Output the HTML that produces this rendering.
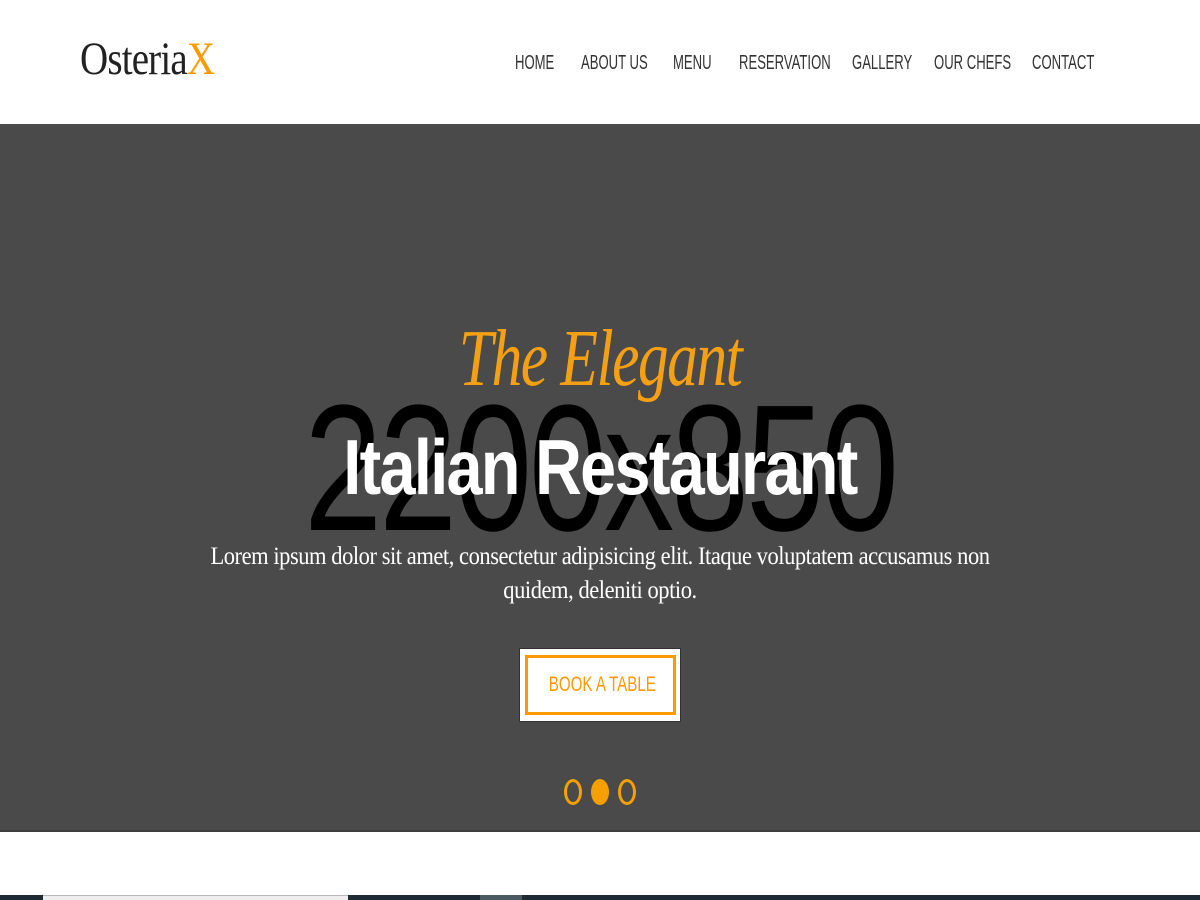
<!DOCTYPE html>
<html><head><meta charset="utf-8"><style>
*{margin:0;padding:0;box-sizing:border-box}
body{width:1200px;height:900px;overflow:hidden;background:#fff;font-family:"Liberation Sans",sans-serif;position:relative}
.logo{position:absolute;left:80px;top:32px;font-family:"Liberation Serif",serif;font-size:47px;color:#222;letter-spacing:-1px;transform:scaleX(.83);transform-origin:left}
.logo span{color:#f90}
nav{position:absolute;top:52px;left:515px;font-size:20px;color:#333}
nav a{position:absolute;white-space:nowrap;transform:scaleX(.655);transform-origin:left}
.hero{position:absolute;left:0;top:124px;width:1200px;height:708px;background:#4a4a4a;border-bottom:2px solid #3e3e3e}
.big{position:absolute;left:0;width:1200px;top:255px;text-align:center;font-size:180px;color:#000;transform:scaleX(.78);letter-spacing:-4px;line-height:1}
.eleg{position:absolute;width:1200px;text-align:center;top:190px;font-family:"Liberation Serif",serif;font-style:italic;font-size:80px;color:#f5a012;letter-spacing:-2px;transform:scaleX(.77)}
.it{position:absolute;width:1200px;text-align:center;top:298px;font-size:78px;font-weight:bold;color:#fff;transform:scaleX(.83);letter-spacing:-2px}
.p{position:absolute;width:1200px;text-align:center;top:416px;font-family:"Liberation Serif",serif;font-size:25px;color:#fff;line-height:34px;transform:scaleX(.9);letter-spacing:-.5px}
.btn{position:absolute;left:519px;top:524px;width:162px;height:74px;background:#fff;border:1px solid #333}
.btn div{position:absolute;left:5px;top:6px;width:151px;height:60px;border:3px solid #f90;color:#f90;font-size:21px;text-align:center;line-height:54px;white-space:nowrap}
.btn span{display:inline-block;transform:scaleX(.72)}
.dot{position:absolute;top:655px;width:18px;height:26px;border-radius:50%;border:3px solid #f5a000}
.bot{position:absolute;top:895px;left:0;width:1200px;height:5px;background:#1e2b33}
</style></head><body>
<div class="logo">Osteria<span>X</span></div>
<nav>
<a style="left:0">HOME</a><a style="left:66px">ABOUT US</a><a style="left:158px">MENU</a><a style="left:224px">RESERVATION</a><a style="left:337px">GALLERY</a><a style="left:419px">OUR CHEFS</a><a style="left:517px">CONTACT</a>
</nav>
<div class="hero">
<div class="big">2200x850</div>
<div class="eleg">The Elegant</div>
<div class="it">Italian Restaurant</div>
<div class="p">Lorem ipsum dolor sit amet, consectetur adipisicing elit. Itaque voluptatem accusamus non<br>quidem, deleniti optio.</div>
<div class="btn"><div><span>BOOK A TABLE</span></div></div>
<div class="dot" style="left:564px"></div>
<div class="dot" style="left:591px;background:#f5a000"></div>
<div class="dot" style="left:618px"></div>
</div>
<div class="bot"><div style="position:absolute;left:43px;width:305px;height:5px;background:#eee;border-top:1px solid #bbb"></div><div style="position:absolute;left:480px;width:42px;height:5px;background:#4b5a62"></div></div>
</body></html>
